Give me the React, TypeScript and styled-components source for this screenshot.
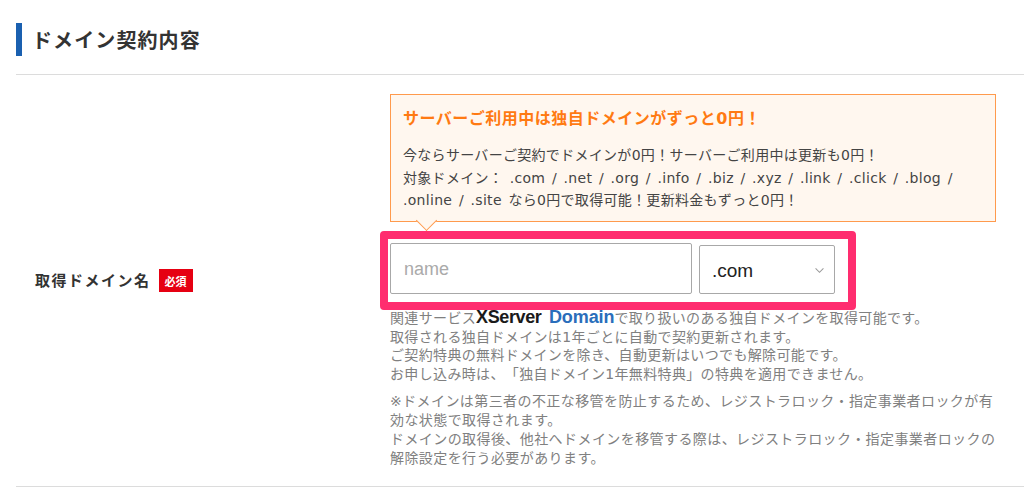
import React from 'react';
import styled, { createGlobalStyle } from 'styled-components';

const GlobalStyle = createGlobalStyle`
  html, body {
    margin: 0;
    padding: 0;
    background: #ffffff;
  }
  body {
    font-family: "Noto Sans CJK JP", sans-serif;
    overflow: hidden;
  }
`;

const App = () => {
  return (
    <Page>
      <GlobalStyle />
      <Heading>
        <HeadingBar />
        <HeadingText>ドメイン契約内容</HeadingText>
      </Heading>
      <Row>
        <LabelCol>
          <Label>取得ドメイン名</Label>
          <Required>必須</Required>
        </LabelCol>
        <FieldCol>
          <Notice>
            <NoticeTitle>サーバーご利用中は独自ドメインがずっと0円！</NoticeTitle>
            <NoticeText>
              今ならサーバーご契約でドメインが0円！サーバーご利用中は更新も0円！
              <br />
              対象ドメイン： .com / .net / .org / .info / .biz / .xyz / .link / .click / .blog /
              <br />
              .online / .site なら0円で取得可能！更新料金もずっと0円！
            </NoticeText>
          </Notice>
          <Highlight>
            <NameInput placeholder="name" readOnly />
            <SelectWrap>
              <TldSelect defaultValue=".com">
                <option>.com</option>
                <option>.net</option>
              </TldSelect>
              <Chevron viewBox="0 0 12 8" aria-hidden="true">
                <path d="M1.5 1.5 L6 6 L10.5 1.5" />
              </Chevron>
            </SelectWrap>
          </Highlight>
          <Help>
            関連サービス<Brand>XServer <BrandBlue>Domain</BrandBlue></Brand>で取り扱いのある独自ドメインを取得可能です。
            <br />
            取得される独自ドメインは1年ごとに自動で契約更新されます。
            <br />
            ご契約特典の無料ドメインを除き、自動更新はいつでも解除可能です。
            <br />
            お申し込み時は、「独自ドメイン1年無料特典」の特典を適用できません。
          </Help>
          <Caution>
            ※ドメインは第三者の不正な移管を防止するため、レジストラロック・指定事業者ロックが有
            <br />
            効な状態で取得されます。
            <br />
            ドメインの取得後、他社へドメインを移管する際は、レジストラロック・指定事業者ロックの
            <br />
            解除設定を行う必要があります。
          </Caution>
        </FieldCol>
      </Row>
    </Page>
  );
};

export default App;

const latin = `"DejaVu Sans", "Noto Sans CJK JP", sans-serif`;

const Page = styled.div`
  width: 1024px;
  height: 504px;
  box-sizing: border-box;
  padding: 23px 0 0 16px;
  overflow: hidden;
`;

const Heading = styled.div`
  display: flex;
  align-items: center;
  height: 33px;
  padding-bottom: 18px;
  border-bottom: 1px solid #dcdcdc;
`;

const HeadingBar = styled.span`
  width: 6px;
  height: 33px;
  background: #1a60b0;
`;

const HeadingText = styled.h2`
  margin: 0 0 0 10px;
  font-size: 20px;
  font-weight: 700;
  letter-spacing: 1.1px;
  color: #333333;
`;

const Row = styled.div`
  display: flex;
  align-items: center;
  height: 411px;
  border-bottom: 1px solid #dcdcdc;
`;

const LabelCol = styled.div`
  display: flex;
  align-items: center;
  width: 374px;
  padding-left: 19px;
  box-sizing: border-box;
`;

const Label = styled.span`
  font-size: 15px;
  font-weight: 700;
  letter-spacing: 1.5px;
  line-height: 20px;
  margin-top: -2px;
  color: #333333;
`;

const Required = styled.span`
  display: flex;
  align-items: center;
  justify-content: center;
  width: 34px;
  height: 23px;
  margin-left: 8px;
  background: #e60012;
  color: #ffffff;
  font-size: 11px;
  font-weight: 700;
`;

const FieldCol = styled.div`
  align-self: flex-start;
  width: 634px;
  padding-top: 19px;
  font-family: ${latin};
  text-spacing-trim: space-all;
`;

const Notice = styled.div`
  position: relative;
  width: 606px;
  height: 128px;
  box-sizing: border-box;
  padding: 13px 12px 0;
  border: 1px solid #ff9a4d;
  background: #fff7ef;

  &::after {
    content: '';
    position: absolute;
    left: 28px;
    bottom: -7px;
    width: 14px;
    height: 14px;
    background: #fff7ef;
    border-right: 1px solid #ff9a4d;
    border-bottom: 1px solid #ff9a4d;
    transform: rotate(45deg);
  }
`;

const NoticeTitle = styled.div`
  font-size: 16px;
  font-weight: 700;
  letter-spacing: 0.5px;
  line-height: 22px;
  color: #ff7a12;
`;

const NoticeText = styled.div`
  margin-top: 14px;
  font-size: 14px;
  letter-spacing: 0.3px;
  word-spacing: 1.9px;
  line-height: 22.7px;
  color: #444444;
  white-space: nowrap;
`;

const Highlight = styled.div`
  position: relative;
  display: flex;
  align-items: flex-end;
  gap: 7px;
  width: 476px;
  height: 79px;
  box-sizing: border-box;
  margin: 9px 0 0 -10px;
  padding: 3px 0 8px 2px;
  border: 8px solid #ff2d6f;
  border-radius: 4px;
`;

const NameInput = styled.input`
  width: 302px;
  height: 51px;
  box-sizing: border-box;
  padding: 2px 13px 0;
  border: 1px solid #a8a8a8;
  border-radius: 2px;
  background: #ffffff;
  font-family: "Liberation Sans", sans-serif;
  font-size: 18px;
  outline: none;

  &::placeholder {
    color: #aaaaaa;
    opacity: 1;
  }
`;

const SelectWrap = styled.div`
  position: relative;
  width: 136px;
  height: 49px;
`;

const TldSelect = styled.select`
  width: 100%;
  height: 100%;
  box-sizing: border-box;
  padding: 2px 12px 0;
  appearance: none;
  border: 1px solid #a8a8a8;
  border-radius: 2px;
  background: #ffffff;
  color: #222222;
  font-family: "Liberation Sans", sans-serif;
  font-size: 19px;
`;

const Chevron = styled.svg`
  position: absolute;
  top: 22px;
  right: 10px;
  width: 11px;
  height: 7px;
  fill: none;
  stroke: #9a9a9a;
  stroke-width: 1.2;
`;

const Help = styled.p`
  margin: -2px 0 0;
  font-size: 14px;
  letter-spacing: 0.35px;
  line-height: 18.7px;
  color: #808080;
  white-space: nowrap;
`;

const Brand = styled.span`
  font-family: "Liberation Sans", sans-serif;
  font-size: 18px;
  font-weight: 700;
  letter-spacing: -0.4px;
  word-spacing: 3px;
  line-height: 18px;
  color: #1a1a1a;
`;

const BrandBlue = styled.span`
  letter-spacing: -0.1px;
  color: #2a6ebb;
`;

const Caution = styled.p`
  margin: 8px 0 0;
  font-size: 14px;
  letter-spacing: 0.42px;
  line-height: 18.9px;
  color: #808080;
  white-space: nowrap;
`;
